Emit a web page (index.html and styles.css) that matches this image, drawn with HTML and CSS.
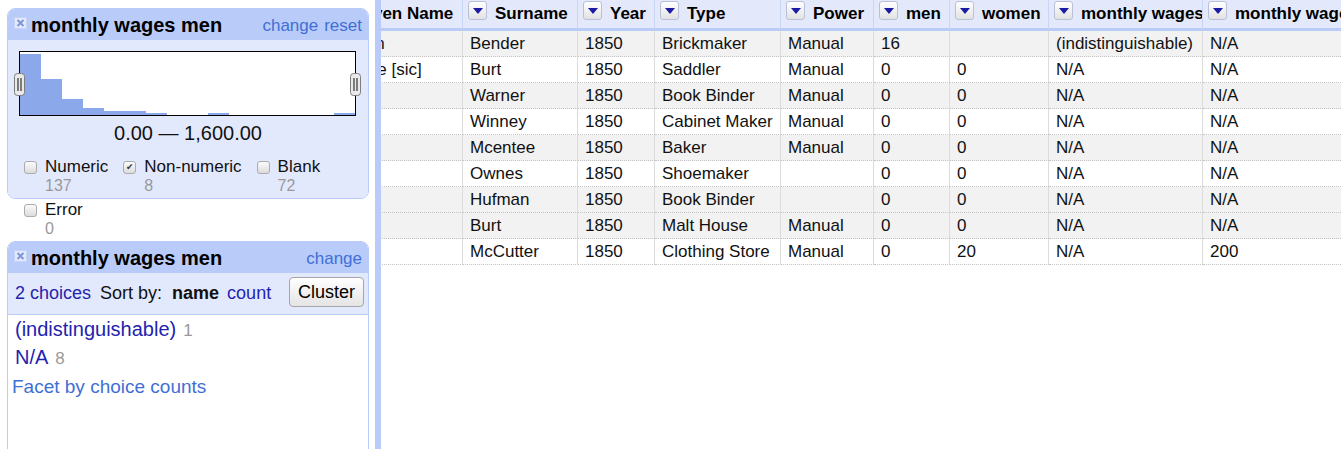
FILE: index.html
```html
<!DOCTYPE html>
<html lang="en">
<head>
    <meta charset="UTF-8">
    <title>OpenRefine - monthly wages</title>
    <link rel="stylesheet" href="styles.css">
</head>
<body>
    <div class="app">
        <aside class="left-panel">
            <!-- range facet -->
            <div class="facet">
                <div class="facet-title">
                    <span class="facet-close">
                        <svg width="13" height="12" viewBox="0 0 13 12"><rect x="0.5" y="0.5" width="12" height="11" fill="#e4eafb" stroke="#c5d2f5"/><path d="M3.5 3L9.5 9M9.5 3L3.5 9" stroke="#7e97db" stroke-width="2"/></svg>
                    </span>
                    <span class="facet-name">monthly wages men</span>
                    <span class="facet-links"><a>change</a><a>reset</a></span>
                </div>
                <div class="facet-body">
                    <div class="histogram">
                        <div class="bars">
                            <span class="bar" style="height:61px"></span>
                            <span class="bar" style="height:36px"></span>
                            <span class="bar" style="height:16px"></span>
                            <span class="bar" style="height:7px"></span>
                            <span class="bar" style="height:4px"></span>
                            <span class="bar" style="height:4px"></span>
                            <span class="bar" style="height:2px"></span>
                            <span class="bar" style="height:0px"></span>
                            <span class="bar" style="height:0px"></span>
                            <span class="bar" style="height:2px"></span>
                            <span class="bar" style="height:0px"></span>
                            <span class="bar" style="height:0px"></span>
                            <span class="bar" style="height:0px"></span>
                            <span class="bar" style="height:0px"></span>
                            <span class="bar" style="height:0px"></span>
                            <span class="bar" style="height:2px"></span>
                        </div>
                        <span class="handle handle-left">
                            <svg width="11" height="23" viewBox="0 0 11 23"><rect x="0.5" y="0.5" width="10" height="22" rx="3" fill="#e9e9e9" stroke="#7d7d7d"/><path d="M4 5v13M7 5v13" stroke="#333" stroke-width="1.2"/></svg>
                        </span>
                        <span class="handle handle-right">
                            <svg width="11" height="23" viewBox="0 0 11 23"><rect x="0.5" y="0.5" width="10" height="22" rx="3" fill="#e9e9e9" stroke="#7d7d7d"/><path d="M4 5v13M7 5v13" stroke="#333" stroke-width="1.2"/></svg>
                        </span>
                    </div>
                    <div class="range-label">0.00 — 1,600.00</div>
                    <div class="choices">
                        <div class="choice">
                            <span class="check"></span>
                            <span class="choice-label">Numeric</span>
                            <span class="choice-count">137</span>
                        </div>
                        <div class="choice">
                            <span class="check checked">✔</span>
                            <span class="choice-label">Non-numeric</span>
                            <span class="choice-count">8</span>
                        </div>
                        <div class="choice">
                            <span class="check"></span>
                            <span class="choice-label">Blank</span>
                            <span class="choice-count">72</span>
                        </div>
                    </div>
                </div>
            </div>

            <div class="choice error-choice">
                <span class="check"></span>
                <span class="choice-label">Error</span>
                <span class="choice-count">0</span>
            </div>

            <!-- list facet -->
            <div class="facet list-facet">
                <div class="facet-title">
                    <span class="facet-close">
                        <svg width="13" height="12" viewBox="0 0 13 12"><rect x="0.5" y="0.5" width="12" height="11" fill="#e4eafb" stroke="#c5d2f5"/><path d="M3.5 3L9.5 9M9.5 3L3.5 9" stroke="#7e97db" stroke-width="2"/></svg>
                    </span>
                    <span class="facet-name">monthly wages men</span>
                    <span class="facet-links"><a>change</a></span>
                </div>
                <div class="facet-controls">
                    <a class="choice-total">2 choices</a>
                    <span class="sort-by">Sort by:</span>
                    <b class="sort-name">name</b>
                    <a class="sort-count">count</a>
                    <button class="cluster">Cluster</button>
                </div>
                <div class="facet-list">
                    <div class="facet-item"><a>(indistinguishable)</a><span class="item-count">1</span></div>
                    <div class="facet-item"><a>N/A</a><span class="item-count">8</span></div>
                    <a class="facet-more">Facet by choice counts</a>
                </div>
            </div>
        </aside>

        <div class="divider"></div>

        <div class="grid-wrap">
            <table class="data-table">
                <colgroup>
                    <col class="w-given">
                    <col class="w-surname">
                    <col class="w-year">
                    <col class="w-type">
                    <col class="w-power">
                    <col class="w-men">
                    <col class="w-women">
                    <col class="w-wages">
                    <col class="w-wages2">
                </colgroup>
                <thead>
                    <tr>
                        <th><div class="col-head"><span class="menu-btn"><svg width="10" height="6" viewBox="0 0 10 6"><path d="M0 0H10L5 6Z" fill="#1b1ba6"/></svg></span><span>Given Name</span></div></th>
                        <th><div class="col-head"><span class="menu-btn"><svg width="10" height="6" viewBox="0 0 10 6"><path d="M0 0H10L5 6Z" fill="#1b1ba6"/></svg></span><span>Surname</span></div></th>
                        <th><div class="col-head"><span class="menu-btn"><svg width="10" height="6" viewBox="0 0 10 6"><path d="M0 0H10L5 6Z" fill="#1b1ba6"/></svg></span><span>Year</span></div></th>
                        <th><div class="col-head"><span class="menu-btn"><svg width="10" height="6" viewBox="0 0 10 6"><path d="M0 0H10L5 6Z" fill="#1b1ba6"/></svg></span><span>Type</span></div></th>
                        <th><div class="col-head"><span class="menu-btn"><svg width="10" height="6" viewBox="0 0 10 6"><path d="M0 0H10L5 6Z" fill="#1b1ba6"/></svg></span><span>Power</span></div></th>
                        <th><div class="col-head"><span class="menu-btn"><svg width="10" height="6" viewBox="0 0 10 6"><path d="M0 0H10L5 6Z" fill="#1b1ba6"/></svg></span><span>men</span></div></th>
                        <th><div class="col-head"><span class="menu-btn"><svg width="10" height="6" viewBox="0 0 10 6"><path d="M0 0H10L5 6Z" fill="#1b1ba6"/></svg></span><span>women</span></div></th>
                        <th><div class="col-head"><span class="menu-btn"><svg width="10" height="6" viewBox="0 0 10 6"><path d="M0 0H10L5 6Z" fill="#1b1ba6"/></svg></span><span>monthly wages men</span></div></th>
                        <th><div class="col-head"><span class="menu-btn"><svg width="10" height="6" viewBox="0 0 10 6"><path d="M0 0H10L5 6Z" fill="#1b1ba6"/></svg></span><span>monthly wages women</span></div></th>
                    </tr>
                </thead>
                <tbody>
                    <tr class="odd"><td>Nathan</td><td>Bender</td><td>1850</td><td>Brickmaker</td><td>Manual</td><td>16</td><td></td><td>(indistinguishable)</td><td>N/A</td></tr>
                    <tr><td>George [sic]</td><td>Burt</td><td>1850</td><td>Saddler</td><td>Manual</td><td>0</td><td>0</td><td>N/A</td><td>N/A</td></tr>
                    <tr class="odd"><td>John</td><td>Warner</td><td>1850</td><td>Book Binder</td><td>Manual</td><td>0</td><td>0</td><td>N/A</td><td>N/A</td></tr>
                    <tr><td>Peter</td><td>Winney</td><td>1850</td><td>Cabinet Maker</td><td>Manual</td><td>0</td><td>0</td><td>N/A</td><td>N/A</td></tr>
                    <tr class="odd"><td>Jacob</td><td>Mcentee</td><td>1850</td><td>Baker</td><td>Manual</td><td>0</td><td>0</td><td>N/A</td><td>N/A</td></tr>
                    <tr><td>Isaac</td><td>Ownes</td><td>1850</td><td>Shoemaker</td><td></td><td>0</td><td>0</td><td>N/A</td><td>N/A</td></tr>
                    <tr class="odd"><td>Henry</td><td>Hufman</td><td>1850</td><td>Book Binder</td><td></td><td>0</td><td>0</td><td>N/A</td><td>N/A</td></tr>
                    <tr class="odd"><td>David</td><td>Burt</td><td>1850</td><td>Malt House</td><td>Manual</td><td>0</td><td>0</td><td>N/A</td><td>N/A</td></tr>
                    <tr><td>Adam</td><td>McCutter</td><td>1850</td><td>Clothing Store</td><td>Manual</td><td>0</td><td>20</td><td>N/A</td><td>200</td></tr>
                </tbody>
            </table>
        </div>
    </div>
</body>
</html>
```

FILE: styles.css
```css
* {
    box-sizing: border-box;
}

body {
    margin: 0;
    height: 449px;
    overflow: hidden;
    font-family: "Liberation Sans", Arial, sans-serif;
    color: #111;
    background: #fff;
}

a {
    cursor: pointer;
}

.app {
    display: flex;
    height: 449px;
}

/* left panel */
.left-panel {
    width: 375px;
    flex: none;
    padding-top: 8px;
}

.divider {
    width: 6px;
    flex: none;
    background: #b9ccf9;
}

.facet {
    margin: 0 6px 0 7px;
    border: 1px solid #b9ccf9;
    border-radius: 8px;
    overflow: hidden;
}

.facet-title {
    display: flex;
    align-items: center;
    height: 31px;
    padding: 2px 6px 0;
    background: #b9ccf9;
}

.facet-close {
    display: flex;
    margin-right: 4px;
    margin-top: -5px;
}

.facet-name {
    font-size: 20px;
    font-weight: bold;
    color: #000;
}

.facet-links {
    margin-left: auto;
    display: flex;
    gap: 6px;
    font-size: 17px;
    color: #3f6fd6;
}

.facet-body {
    background: #e3e9fd;
    padding: 11px 0 3px 11px;
}

.histogram {
    position: relative;
    width: 337px;
    height: 65px;
    border: 1px solid #000;
    background: #fff;
}

.bars {
    display: flex;
    align-items: flex-end;
    height: 63px;
}

.bar {
    flex: 1;
    background: #8aa8ea;
}

.handle {
    position: absolute;
    top: 21px;
    display: flex;
}

.handle-left {
    left: -6px;
}

.handle-right {
    right: -6px;
}

.range-label {
    margin-top: 5px;
    padding-right: 11px;
    text-align: center;
    font-size: 20px;
    line-height: 24px;
}

.choices {
    display: flex;
    gap: 15px;
    margin-top: 12px;
    padding-left: 5px;
}

.choice {
    display: grid;
    grid-template-columns: 13px auto;
    column-gap: 8px;
}

.check {
    grid-row: 1;
    align-self: center;
    width: 13px;
    height: 13px;
    border: 1px solid #ababab;
    border-radius: 3px;
    background: linear-gradient(#fbfbfb, #dcdcdc);
    font-family: "DejaVu Sans", sans-serif;
    font-size: 9px;
    line-height: 11px;
    text-align: center;
    color: #333;
}

.choice-label {
    grid-row: 1;
    grid-column: 2;
    font-size: 17px;
    line-height: 20px;
}

.choice-count {
    grid-row: 2;
    grid-column: 2;
    font-size: 16px;
    line-height: 18px;
    color: #999;
}

.error-choice {
    margin: 1px 0 0 24px;
}

.list-facet {
    margin-top: 3px;
}

.facet-controls {
    display: flex;
    align-items: center;
    height: 42px;
    padding: 0 4px 0 7px;
    background: #e3e9fd;
    border-bottom: 1px solid #b9ccf9;
    font-size: 18px;
}

.choice-total,
.sort-count {
    color: #2323b0;
}

.sort-by {
    margin-left: 9px;
}

.sort-name {
    margin-left: 10px;
}

.sort-count {
    margin-left: 8px;
}

.cluster {
    margin-left: auto;
    margin-top: -3px;
    height: 30px;
    padding: 0 8px;
    border: 1px solid #a6a6a6;
    border-radius: 4px;
    background: linear-gradient(#ffffff, #e4e4e4);
    font-family: inherit;
    font-size: 18px;
    color: #000;
}

.facet-list {
    min-height: 200px;
    padding: 0 7px;
    background: #fff;
}

.facet-item {
    display: flex;
    align-items: baseline;
    height: 28px;
    font-size: 20px;
    line-height: 28px;
    color: #2323b0;
}

.item-count {
    margin-left: 7px;
    font-size: 17px;
    color: #999;
}

.facet-more {
    display: block;
    margin: 4px 0 0 -3px;
    font-size: 19px;
    line-height: 24px;
    color: #3f6fd6;
}

/* data grid */
.grid-wrap {
    flex: 1;
    overflow: hidden;
}

.data-table {
    margin-left: -58px;
    width: 1050px;
    table-layout: fixed;
    border-collapse: separate;
    border-spacing: 0;
    font-size: 17px;
}

.w-given { width: 140px; }
.w-surname { width: 115px; }
.w-year { width: 77px; }
.w-type { width: 126px; }
.w-power { width: 93px; }
.w-men { width: 76px; }
.w-women { width: 99px; }
.w-wages { width: 154px; }
.w-wages2 { width: 170px; }

.data-table th {
    padding: 0 0 0 5px;
    background: #e3e8fa;
    border-right: 1px solid #c9d5f6;
    border-bottom: 3px solid #b9ccf9;
    text-align: left;
    white-space: nowrap;
    overflow: hidden;
}

.col-head {
    display: flex;
    align-items: flex-start;
    gap: 8px;
    height: 28px;
    line-height: 27px;
    font-weight: bold;
    color: #000;
}

.menu-btn {
    flex: none;
    display: flex;
    justify-content: center;
    align-items: flex-start;
    width: 19px;
    height: 19px;
    margin-top: 1px;
    padding-top: 6px;
    border: 1px solid #b9c1d8;
    border-radius: 3px;
    background: linear-gradient(#ffffff, #e2e2e2);
}

.data-table td {
    padding: 0 7px;
    line-height: 25px;
    border-right: 1px solid #dcdcdc;
    border-bottom: 1px dotted #c4c4c4;
    white-space: nowrap;
    overflow: hidden;
}

.data-table tr.odd td {
    background: #f2f2f2;
}
```
